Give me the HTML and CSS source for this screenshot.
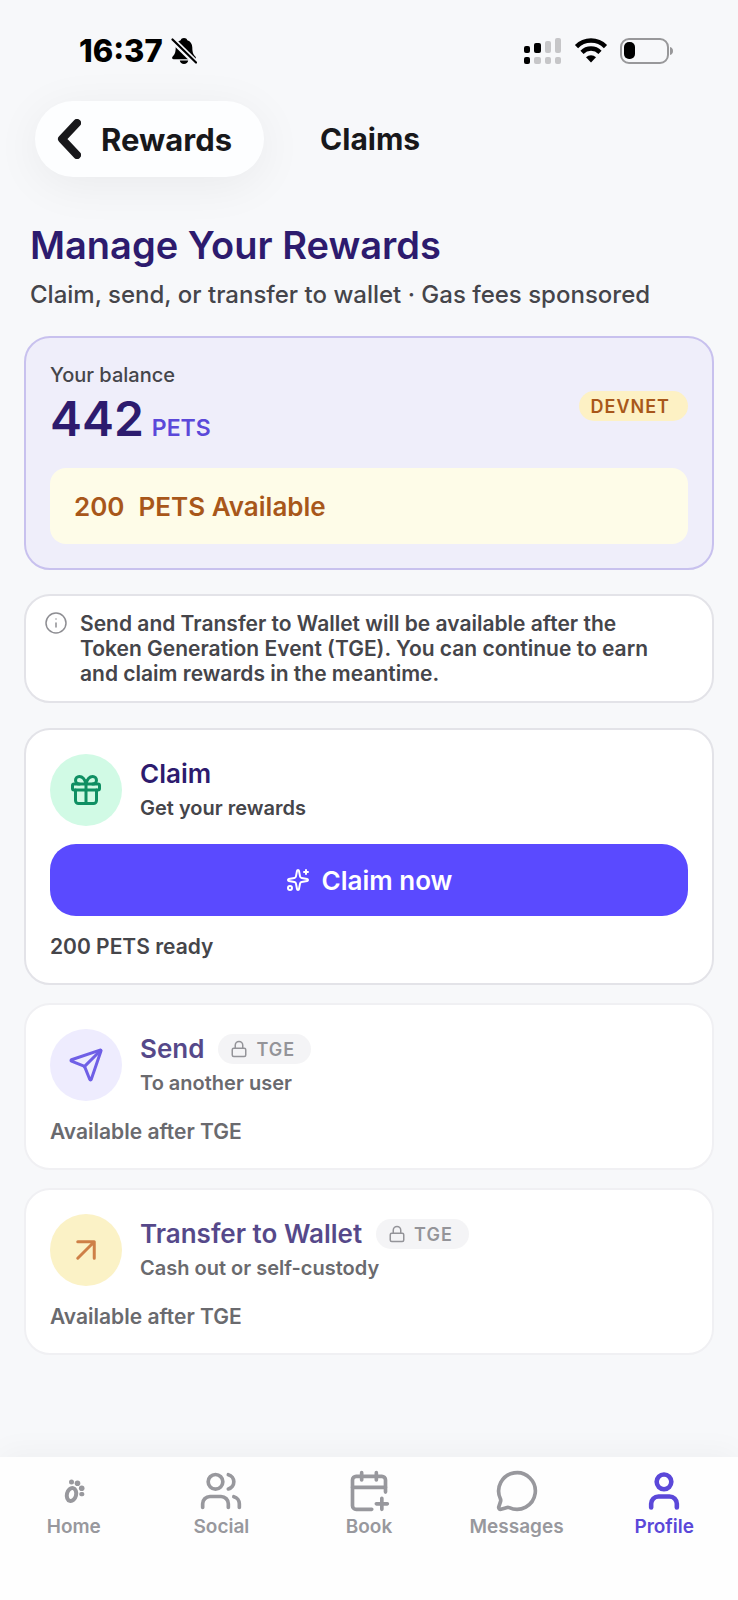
FILE: index.html
```
<!DOCTYPE html>
<html lang="en">
<head>
  <meta charset="UTF-8">
  <meta name="viewport" content="width=device-width, initial-scale=1.0">
  <title>Claims - Rewards</title>
  <link rel="stylesheet" href="styles.css">
</head>
<body>
  <div class="status-bar">
    <div class="status-time">
      <span>16:37</span>
      <svg class="bell" viewBox="0 0 26 28" aria-hidden="true">
        <path d="M13 1c1.700 0 2.900.8 3.300 2.200 3.200 1 5 3.700 5 7.200 0 5.600 1.400 7.300 3.200 9.300.9 1.100.2 2.500-1.200 2.500H2.700c-1.400 0-2.100-1.400-1.200-2.500 1.800-2 3.200-3.700 3.200-9.300 0-3.500 1.800-6.200 5-7.200C10.100 1.800 11.300 1 13 1z" fill="#000"/>
        <path d="M8.800 23.600h8.400c-.3 2-2 3.400-4.200 3.400s-3.900-1.400-4.200-3.400z" fill="#000"/>
        <path d="M1 2.500 25 26" stroke="#f7f8fb" stroke-width="6"/>
        <path d="M1.500 2.500 25 25.500" stroke="#000" stroke-width="2.200" stroke-linecap="round"/>
      </svg>
    </div>
    <div class="status-icons">
      <svg class="signal" viewBox="0 0 38 26" aria-hidden="true">
        <rect x="0" y="8" width="6" height="7" rx="2"/>
        <rect x="10" y="5" width="7" height="10" rx="2"/>
        <rect x="0" y="19" width="6" height="7" rx="2"/>
        <g fill="#c6c6c8">
          <rect x="21" y="3" width="6" height="12" rx="2"/>
          <rect x="31" y="0" width="6" height="15" rx="2"/>
          <rect x="10" y="19" width="7" height="7" rx="2"/>
          <rect x="21" y="19" width="6" height="7" rx="2"/>
          <rect x="31" y="19" width="6" height="7" rx="2"/>
        </g>
      </svg>
      <svg class="wifi" viewBox="0 0 34 25" aria-hidden="true">
        <path d="M2.500 8.600a20.500 20.500 0 0 1 29 0" fill="none" stroke="#000" stroke-width="4.500"/>
        <path d="M8 14.300a12.800 12.800 0 0 1 18 0" fill="none" stroke="#000" stroke-width="4.500"/>
        <path d="M17 24.500l-5-5.200a7.200 7.200 0 0 1 10 0z"/>
      </svg>
      <svg class="battery" viewBox="0 0 54 26" aria-hidden="true">
        <rect x="1" y="1" width="47" height="24" rx="8" fill="none" stroke="#98989a" stroke-width="2"/>
        <rect x="4" y="4" width="11" height="17" rx="5"/>
        <path d="M50 9c2 .6 3 2 3 4s-1 3.400-3 4z" fill="#98989a"/>
      </svg>
    </div>
  </div>

  <header class="header">
    <button type="button" class="back">
      <svg viewBox="0 0 24 40" aria-hidden="true"><path d="M20 4 5 20l15 16"/></svg>
      Rewards
    </button>
    <span class="header-title">Claims</span>
  </header>

  <main class="content">
    <h1>Manage Your Rewards</h1>
    <p class="lead">Claim, send, or transfer to wallet · Gas fees sponsored</p>

    <section class="card balance">
      <div class="balance-top">
        <div>
          <div class="balance-label">Your balance</div>
          <div class="balance-value"><strong>442</strong><span>PETS</span></div>
        </div>
        <span class="badge devnet">DEVNET</span>
      </div>
      <div class="available"><span>200</span><span>PETS Available</span></div>
    </section>

    <section class="card notice">
      <svg class="icon" viewBox="0 0 24 24" aria-hidden="true"><circle cx="12" cy="12" r="10"/><path d="M12 16v-4M12 8h.01"/></svg>
      <p>Send and Transfer to Wallet will be available after the Token Generation Event (TGE). You can continue to earn and claim rewards in the meantime.</p>
    </section>

    <div class="actions">
      <section class="card action">
        <div class="action-head">
          <div class="circle green">
            <svg class="icon" viewBox="0 0 24 24" aria-hidden="true"><rect x="3" y="8" width="18" height="4" rx="1"/><path d="M12 8v13M19 12v7a2 2 0 0 1-2 2H7a2 2 0 0 1-2-2v-7"/><path d="M7.500 8a2.500 2.500 0 0 1 0-5A4.800 8 0 0 1 12 8a4.800 8 0 0 1 4.500-5 2.500 2.500 0 0 1 0 5"/></svg>
          </div>
          <div>
            <h2>Claim</h2>
            <p>Get your rewards</p>
          </div>
        </div>
        <button type="button" class="claim-btn">
          <svg class="icon" viewBox="0 0 24 24" aria-hidden="true"><path d="M11.017 2.814a1 1 0 0 1 1.966 0l1.051 5.558a2 2 0 0 0 1.594 1.594l5.558 1.051a1 1 0 0 1 0 1.966l-5.558 1.051a2 2 0 0 0-1.594 1.594l-1.051 5.558a1 1 0 0 1-1.966 0l-1.051-5.558a2 2 0 0 0-1.594-1.594l-5.558-1.051a1 1 0 0 1 0-1.966l5.558-1.051a2 2 0 0 0 1.594-1.594z"/><path d="M20 2v4M22 4h-4"/><circle cx="4" cy="20" r="2"/></svg>
          Claim now
        </button>
        <p class="action-foot">200 PETS ready</p>
      </section>

      <section class="card action locked">
        <div class="action-head">
          <div class="circle violet">
            <svg class="icon" viewBox="0 0 24 24" aria-hidden="true"><path d="M14.536 21.686a.5.5 0 0 0 .937-.024l6.500-19a.496.496 0 0 0-.635-.635l-19 6.500a.5.5 0 0 0-.024.937l7.930 3.180a2 2 0 0 1 1.112 1.110z"/><path d="m21.854 2.147-10.940 10.939"/></svg>
          </div>
          <div>
            <div class="action-title">
              <h2>Send</h2>
              <span class="badge tge"><svg class="icon" viewBox="0 0 24 24" aria-hidden="true"><rect x="3" y="11" width="18" height="11" rx="2"/><path d="M7 11V7a5 5 0 0 1 10 0v4"/></svg>TGE</span>
            </div>
            <p>To another user</p>
          </div>
        </div>
        <p class="action-foot">Available after TGE</p>
      </section>

      <section class="card action locked">
        <div class="action-head">
          <div class="circle yellow">
            <svg class="icon" viewBox="0 0 24 24" aria-hidden="true"><path d="M6.500 6.500h11v11M6.500 17.500l11-11"/></svg>
          </div>
          <div>
            <div class="action-title">
              <h2>Transfer to Wallet</h2>
              <span class="badge tge"><svg class="icon" viewBox="0 0 24 24" aria-hidden="true"><rect x="3" y="11" width="18" height="11" rx="2"/><path d="M7 11V7a5 5 0 0 1 10 0v4"/></svg>TGE</span>
            </div>
            <p>Cash out or self-custody</p>
          </div>
        </div>
        <p class="action-foot">Available after TGE</p>
      </section>
    </div>
  </main>

  <nav class="tabs">
    <a href="#home">
      <svg class="icon" viewBox="0 0 44 44" aria-hidden="true"><ellipse cx="19.500" cy="25.500" rx="4.600" ry="6.600" transform="rotate(14 19.500 25.500)" stroke-width="4"/><g class="toes"><circle cx="19.500" cy="13" r="2.500"/><circle cx="25.500" cy="14.300" r="2.800"/><circle cx="29.700" cy="19.200" r="2.800"/><rect x="27.300" y="23" width="5" height="4.200" rx="1.800"/></g></svg>
      Home
    </a>
    <a href="#social">
      <svg class="icon" viewBox="0 0 24 24" aria-hidden="true"><path d="M16 21v-2a4 4 0 0 0-4-4H6a4 4 0 0 0-4 4v2"/><circle cx="9" cy="7" r="4"/><path d="M22 21v-2a4 4 0 0 0-3-3.870M16 3.128a4 4 0 0 1 0 7.744"/></svg>
      Social
    </a>
    <a href="#book">
      <svg class="icon" viewBox="0 0 24 24" aria-hidden="true"><path d="M8 2v4M16 2v4M3 10h18M16 19h6M19 16v6"/><path d="M21 12.598V6a2 2 0 0 0-2-2H5a2 2 0 0 0-2 2v14a2 2 0 0 0 2 2h8.500"/></svg>
      Book
    </a>
    <a href="#messages">
      <svg class="icon" viewBox="0 0 24 24" aria-hidden="true"><path d="M2.992 16.342a2 2 0 0 1 .094 1.167l-1.065 3.290a1 1 0 0 0 1.236 1.168l3.413-.998a2 2 0 0 1 1.099.092 10 10 0 1 0-4.777-4.719"/></svg>
      Messages
    </a>
    <a href="#profile" class="active">
      <svg class="icon" viewBox="0 0 24 24" aria-hidden="true"><path d="M19 21v-2a4 4 0 0 0-4-4H9a4 4 0 0 0-4 4v2"/><circle cx="12" cy="7" r="4"/></svg>
      Profile
    </a>
  </nav>
</body>
</html>
```
FILE: styles.css
```
:root {
  --bg: #f7f8fa;
  --ink: #2d1b6e;
  --text: #45454a;
  --accent: #5b48d9;
  --line: #e3e3e8;
  --amber: #a8571a;
}
* {
  box-sizing: border-box;
}
body {
  margin: 0;
  min-height: 100vh;
  display: flex;
  flex-direction: column;
  background: var(--bg);
  color: var(--text);
  font-family: Inter, "Liberation Sans", sans-serif;
  font-weight: 600;
}
h1, h2, p {
  margin: 0;
}
button {
  border: none;
  font-family: inherit;
  cursor: pointer;
}
.icon {
  flex: none;
  fill: none;
  stroke: currentColor;
  stroke-width: 2;
  stroke-linecap: round;
  stroke-linejoin: round;
}

/* status bar */
.status-bar {
  height: 101px;
  padding: 0 64px 0 79px;
  display: flex;
  align-items: center;
  justify-content: space-between;
}
.status-time {
  display: flex;
  align-items: center;
  gap: 8px;
  color: #000;
  font-size: 31px;
  font-weight: 800;
}
.bell {
  width: 26px;
  height: 28px;
}
.status-icons {
  display: flex;
  align-items: center;
  gap: 12px;
}
.signal {
  width: 38px;
  height: 26px;
}
.wifi {
  width: 34px;
  height: 25px;
}
.battery {
  width: 54px;
  height: 26px;
}

/* header */
.header {
  display: flex;
  align-items: center;
  gap: 56px;
  padding: 0 35px;
}
.back {
  display: flex;
  align-items: center;
  gap: 20px;
  height: 76px;
  padding: 0 32px 0 22px;
  border-radius: 38px;
  background: #fdfeff;
  box-shadow: 0 8px 48px rgba(0, 0, 0, 0.06);
  color: #18181b;
  font-size: 31px;
  font-weight: 700;
}
.back svg {
  width: 24px;
  height: 40px;
  fill: none;
  stroke: currentColor;
  stroke-width: 8;
  stroke-linecap: round;
  stroke-linejoin: round;
}
.header-title {
  color: #18181b;
  font-size: 30px;
  font-weight: 700;
}

/* content */
.content {
  flex: 1;
  padding: 44px 24px 80px;
}
h1 {
  padding: 0 6px;
  color: var(--ink);
  font-size: 38px;
  font-weight: 600;
  line-height: 48px;
}
.lead {
  margin-top: 10px;
  padding: 0 6px;
  font-size: 24px;
  font-weight: 500;
  line-height: 32px;
}
.card {
  padding: 24px;
  border: 2px solid var(--line);
  border-radius: 26px;
  background: #fff;
}
.badge {
  display: inline-flex;
  align-items: center;
  height: 30px;
  border-radius: 15px;
  font-size: 18px;
  font-weight: 600;
  letter-spacing: 1px;
}

/* balance */
.balance {
  margin-top: 25px;
  border-color: #c8c1ee;
  background: #efeefa;
}
.balance-top {
  display: flex;
  align-items: center;
  justify-content: space-between;
}
.balance-label {
  font-size: 20px;
  font-weight: 500;
  line-height: 26px;
}
.balance-value {
  display: flex;
  align-items: baseline;
  gap: 8px;
  height: 62px;
  line-height: 62px;
}
.balance-value strong {
  color: var(--ink);
  font-size: 48px;
  font-weight: 600;
}
.balance-value span {
  color: var(--accent);
  font-size: 23px;
}
.devnet {
  padding: 0 18px 0 12px;
  background: #fdf1c4;
  color: var(--amber);
}
.available {
  display: flex;
  align-items: center;
  gap: 14px;
  height: 76px;
  margin-top: 18px;
  padding: 0 24px;
  border-radius: 16px;
  background: #fefce8;
  color: var(--amber);
  font-size: 26px;
}

/* notice */
.notice {
  display: flex;
  gap: 12px;
  margin-top: 24px;
  padding: 15px 40px 15px 18px;
  font-size: 21px;
  line-height: 25px;
}
.notice .icon {
  width: 24px;
  height: 24px;
  color: #8e8e93;
  stroke-width: 1.5;
}

/* actions */
.actions {
  display: flex;
  flex-direction: column;
  gap: 18px;
  margin-top: 25px;
}
.action {
  display: flex;
  flex-direction: column;
  gap: 18px;
}
.action-head {
  display: flex;
  align-items: center;
  gap: 18px;
}
.action-head p {
  font-size: 20px;
  line-height: 32px;
}
.action-title {
  display: flex;
  align-items: center;
  gap: 14px;
}
h2 {
  color: var(--ink);
  font-size: 26px;
  font-weight: 600;
  line-height: 36px;
}
.circle {
  display: grid;
  place-items: center;
  width: 72px;
  height: 72px;
  border-radius: 50%;
}
.circle .icon {
  width: 36px;
  height: 36px;
}
.green {
  background: #d1fae5;
  color: #0f8f63;
}
.violet {
  background: #eae8fe;
  color: #4c38e0;
}
.yellow {
  background: #fbefb8;
  color: #c2611a;
}
.claim-btn {
  display: flex;
  align-items: center;
  justify-content: center;
  gap: 12px;
  height: 72px;
  border-radius: 26px;
  background: #5a4aff;
  color: #fff;
  font-size: 26px;
  font-weight: 600;
}
.claim-btn .icon {
  width: 24px;
  height: 24px;
}
.action-foot {
  font-size: 21px;
  line-height: 25px;
}
.locked {
  border-color: #f0f0f3;
}
.locked .action-head,
.locked .action-foot {
  opacity: 0.8;
}
.tge {
  gap: 8px;
  padding: 0 16px 0 12px;
  background: #f2f2f4;
  color: #7a7a80;
}
.tge .icon {
  width: 18px;
  height: 18px;
}

/* bottom tabs */
.tabs {
  display: grid;
  grid-template-columns: repeat(5, 1fr);
  height: 143px;
  padding-top: 12px;
  background: #fefefe;
  box-shadow: 0 -4px 30px rgba(0, 0, 0, 0.04);
}
.tabs a {
  display: flex;
  flex-direction: column;
  align-items: center;
  gap: 2px;
  color: #98989d;
  font-size: 19px;
  line-height: 24px;
  text-decoration: none;
}
.tabs .icon {
  width: 44px;
  height: 44px;
}
.tabs .toes {
  fill: currentColor;
  stroke: none;
}
.tabs .active {
  color: var(--accent);
}
.tabs .active .icon {
  stroke-width: 2.5;
}
```
